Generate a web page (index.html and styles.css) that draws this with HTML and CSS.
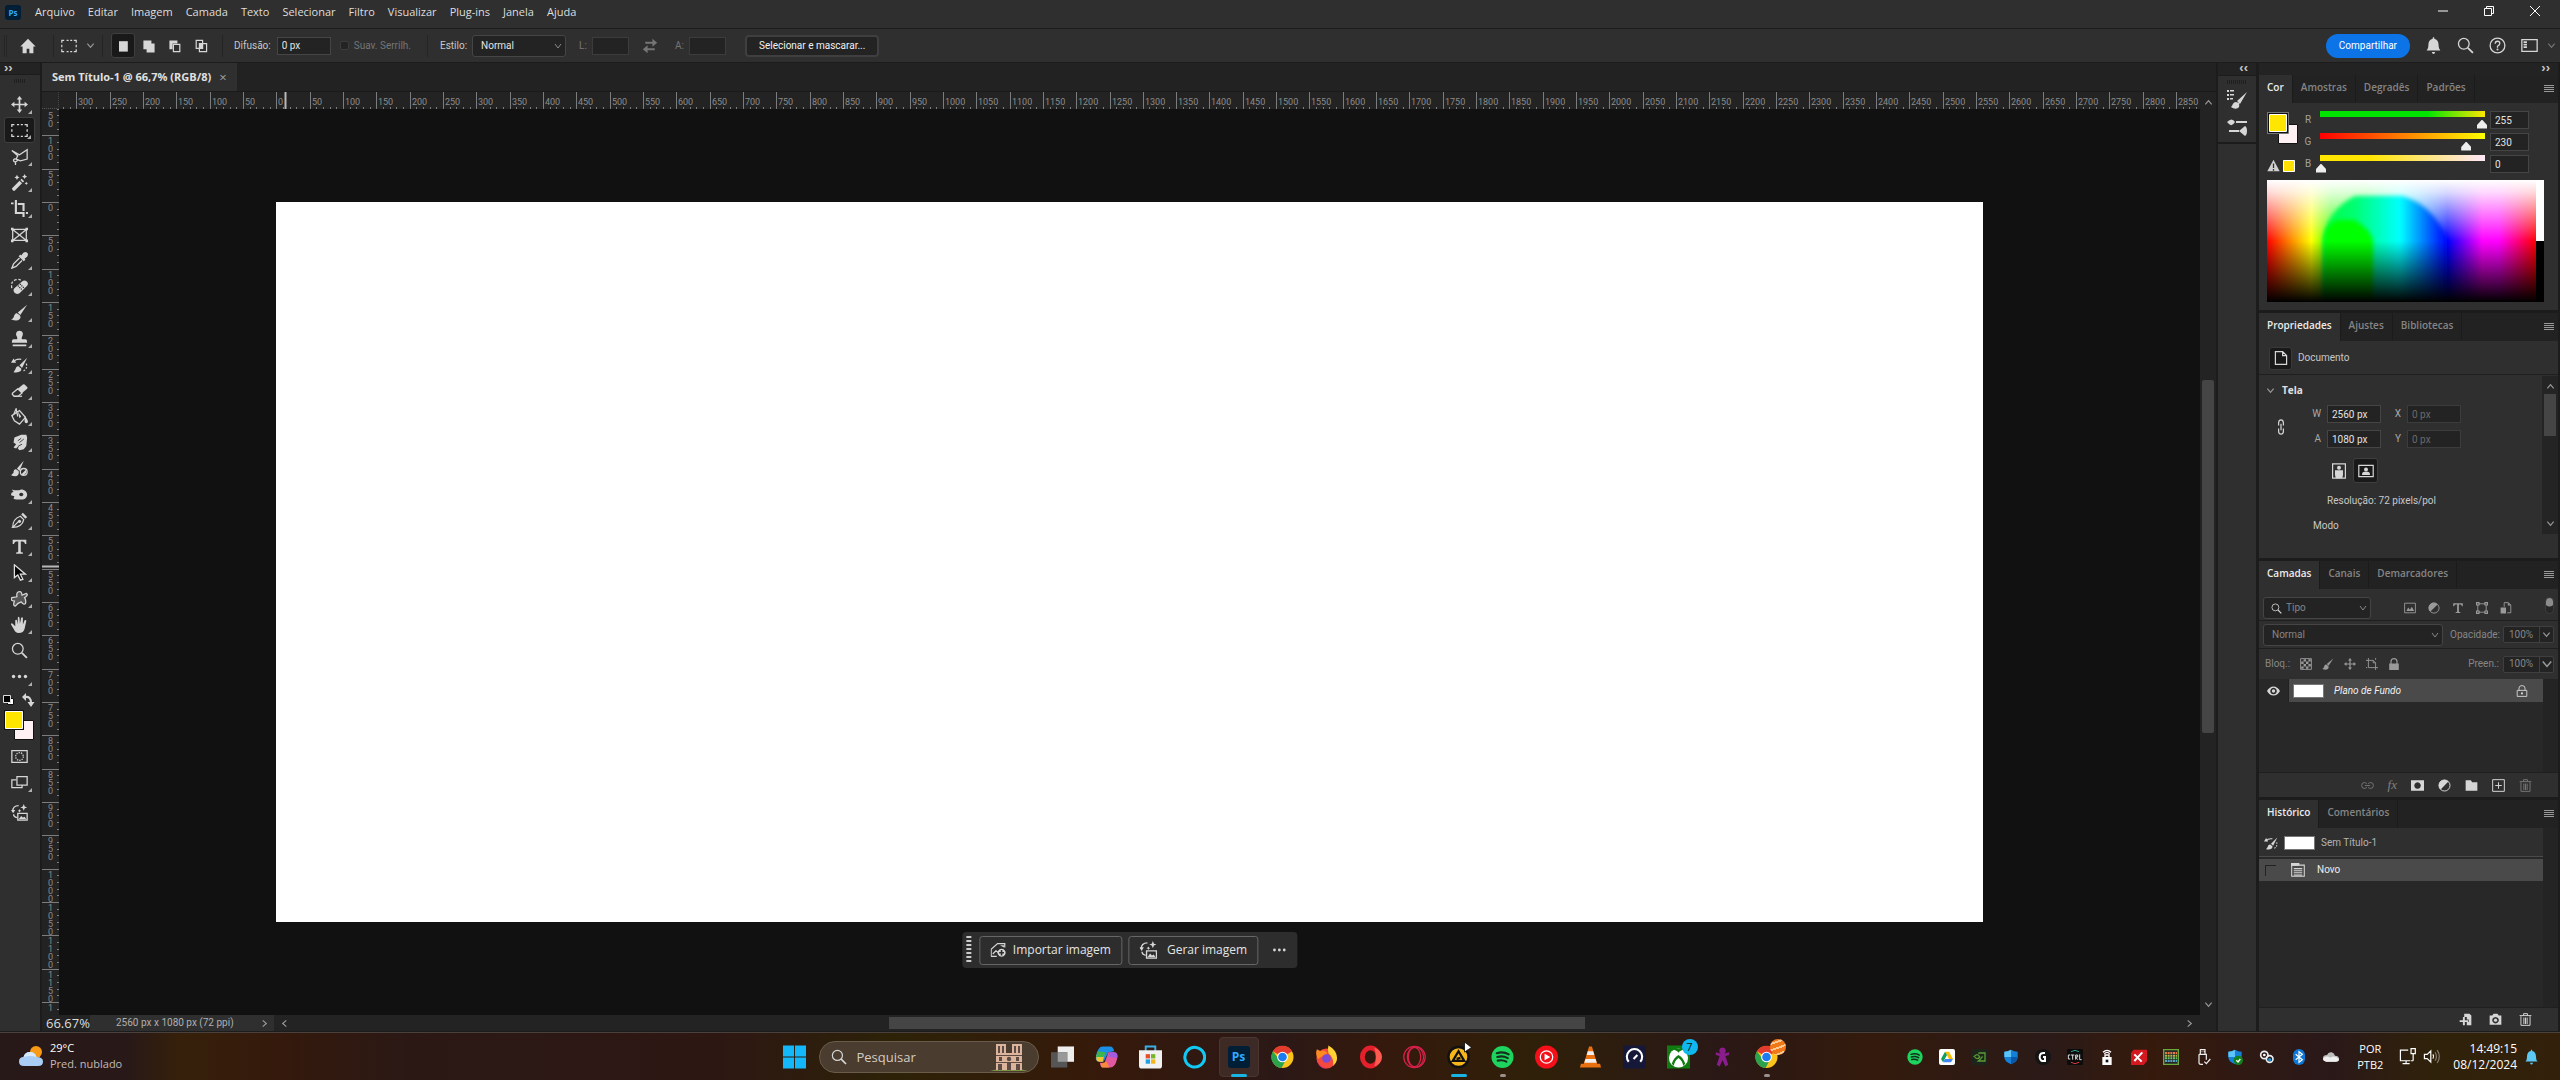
FILE: index.html
```html
<!DOCTYPE html>
<html lang="pt-BR">
<head>
    <meta charset="UTF-8">
    <meta name="viewport" content="width=device-width, initial-scale=1.0">
    <title>Sem Título-1 @ 66,7% (RGB/8)</title>
    <link rel="stylesheet" href="styles.css">
</head>
<body>

<!-- Icon sprite -->
<svg class="sprite" aria-hidden="true">
    <symbol id="i-home" viewBox="0 0 20 20"><path d="M10 2 1.500 10.500H4V18h4.500v-5h3v5H16v-7.500h2.500z"/></symbol>
    <symbol id="i-chev" viewBox="0 0 20 20"><path class="ln" d="m3 6 7 8 7-8"/></symbol>
    <symbol id="i-marquee" viewBox="0 0 20 20"><path class="ln" d="M1 6V3h3M7 3h2.500M11.500 3H14M16 3h3v3M19 8.500v3M19 14v3h-3M14 17h-2.500M9.500 17H7M4 17H1v-3M1 11.500v-3"/></symbol>
    <symbol id="i-sel-new" viewBox="0 0 20 20"><path d="M5 4h11v13H5z"/></symbol>
    <symbol id="i-sel-add" viewBox="0 0 20 20"><path d="M3 3h10v4h4v11H7v-4H3z"/></symbol>
    <symbol id="i-sel-sub" viewBox="0 0 20 20"><path d="M3 3h10v4H7v7H3z"/><path class="ln" d="M8 8h8v9H8z"/></symbol>
    <symbol id="i-sel-int" viewBox="0 0 20 20"><path class="ln" d="M4 3h8v10H4zM8 7h9v10H8z"/><path d="M8 7h4v6H8z"/></symbol>
    <symbol id="i-swap" viewBox="0 0 20 20"><path d="M13 1l6 5-6 5V7.200H4V4.800h9zM7 9l-6 5 6 5v-3.800h9v-2.400H7z"/></symbol>
    <symbol id="i-move" viewBox="0 0 20 20"><path d="m10 0 3.200 4H11v5h5V6.800l4 3.200-4 3.200V11h-5v5h2.200L10 20l-3.200-4H9v-5H4v2.200L0 10l4-3.200V9h5V4H6.800z"/></symbol>
    <symbol id="i-lasso" viewBox="0 0 20 20"><path class="ln" d="m1 3 9 5 9-6v11l-8 2-5-2 2-4zM6 13c-3-1-4 2-2 3s4-1 4-3M5 16c0 2 1 2 0 4"/></symbol>
    <symbol id="i-wand" viewBox="0 0 20 20"><path d="m1 17 9-9 3 3-9 9q-2 0-3-3zm10-10 1.500-1.500 3 3L14 10zM7 1l1 2 2 1-2 1-1 2-1-2-2-1 2-1zM16 0l1 2 2 1-2 1-1 2-1-2-2-1 2-1zM18 9l.7 1.300L20 11l-1.300.7L18 13l-.7-1.300L16 11l1.300-.7z"/></symbol>
    <symbol id="i-crop" viewBox="0 0 20 20"><path d="M0 3h3v2H0zM4.500 0H7v14h9v2.500H4.500zM8 3.500h8V13h-2.500V6H8zM13.500 16.500H16V20h-2.500zM17.500 14H20v2.500h-2.500z"/></symbol>
    <symbol id="i-frame" viewBox="0 0 20 20"><path class="ln" d="M2 4h16v13H2zM2 4l16 13M18 4 2 17"/><path d="M0 2h3v3H0zM17 2h3v3h-3zM0 16h3v3H0zM17 16h3v3h-3z"/></symbol>
    <symbol id="i-eyedrop" viewBox="0 0 20 20"><path d="M12 4q4-6 7-3t-3 7l1 1-2 2-6-6 2-2z"/><path class="ln" d="M10 7 3 14l-2 5 5-2 7-7"/></symbol>
    <symbol id="i-heal" viewBox="0 0 20 20"><path d="m4 12 9-8c4-3 9 2 6 5l-9 9c-5 3-9-3-6-6z"/><path class="ln" stroke-dasharray="3 2" d="M1 12Q-1 4 6 2q4-1 6 1"/><path stroke="#2f2f2f" fill="none" stroke-dasharray="1.500 1" stroke-width="1.500" d="m8 9 5 5M10.500 7l5 5"/></symbol>
    <symbol id="i-brush" viewBox="0 0 20 20"><path d="M19 1 8 10l3 3zM7 11c-3 0-3 3-4 5q-1 2-3 2 7 3 10 0c2-2 1-4 0-5z"/></symbol>
    <symbol id="i-stamp" viewBox="0 0 20 20"><path d="M10 1c4 0 5 4 3 7q-1 2 0 3h4q2 0 2 4H1q0-4 2-4h4q1-1 0-3C5 5 6 1 10 1zM2 17h16v2H2z"/></symbol>
    <symbol id="i-histbrush" viewBox="0 0 20 20"><path d="m19 2-9 9 3 3zM9 12c-3 0-3 2-4 4l-2 3q5 1 8-1c2-2 1-4 0-4zM0 8l3-5 3 5z"/><path class="ln" d="M3 7q3-4 9-3"/><path class="ln" stroke-dasharray="2 2" d="M18 9q2 6-4 9"/></symbol>
    <symbol id="i-eraser" viewBox="0 0 20 20"><path d="m8 8 6-5q1-1 2 0l3 3q1 1 0 2l-6 5z"/><path class="ln" d="m8 8-6 5q-1 1 0 2l2 2h4l5-4z"/><path d="M3 16h10v1.500H3z"/></symbol>
    <symbol id="i-bucket" viewBox="0 0 20 20"><path class="ln" d="m1 9 9-6 7 8-7 8-6-4zM8 10 6 1 3 8"/><path d="M16 9q4 5 4 7t-2 2-2-2zM8 4l4 6-2 2z"/></symbol>
    <symbol id="i-smudge" viewBox="0 0 20 20"><path d="m4 4 8-3h6l1 3-1 10-3 4-5 1-2-2 2-4-4 4-3-1 3-4-3-2z"/><path stroke="#2f2f2f" fill="none" d="m8 8 4-3M10 10l5-4M9 14l4-2"/></symbol>
    <symbol id="i-mixer" viewBox="0 0 20 20"><path d="M15 1 7 10l3 3zM6 11c-3 0-3 3-3 4l-3 3q6 2 8 0c2-2 1-4 1-5z"/><circle class="ln" cx="15" cy="14" r="4"/><path d="m12 17 6-6v4l-3 3z"/></symbol>
    <symbol id="i-sponge" viewBox="0 0 20 20"><path fill-rule="evenodd" d="M1 4q6 2 11 0c4 0 7 3 7 6s-2 6-7 6-7 0-9-1l1-3-4-1q0-4 3-4zM12 8a2.500 2 0 1 0 .1 0z"/></symbol>
    <symbol id="i-pen" viewBox="0 0 20 20"><path class="ln" d="M2 18q0-10 9-13l4 4q-2 9-13 9l7-7"/><path d="m12 3 2-2 5 5-2 2z"/><circle cx="10" cy="11" r="1.800"/></symbol>
    <symbol id="i-type" viewBox="0 0 20 20"><path d="M2 2h16v5h-1.500Q16 4 14 4h-2.500v12q0 1 2.500 1v1.500H6V17q2.500 0 2.500-1V4H6Q4 4 3.500 7H2z"/></symbol>
    <symbol id="i-arrow" viewBox="0 0 20 20"><path fill="#050505" stroke="#e0e0e0" stroke-width="1.500" d="M4 1v15l4-3 3 6 3-1-3-6h6z"/></symbol>
    <symbol id="i-shape" viewBox="0 0 20 20"><path fill="#555" stroke="currentColor" stroke-width="1.500" d="M10 2q2-1 3 4l5-2q3 2-2 5 2 3 1 7-2 2-5-2-4 1-7 5-3 0-1-6-5 0-3-4l6-1q-1-6 3-6z"/></symbol>
    <symbol id="i-hand" viewBox="0 0 20 20"><path d="M5 5q1-1 2 0l1 5V2q1-2 2 0l.500 7L12 2q1-1 2 0v8l2-5q2-1 2 1l-2 9q-1 5-7 5-4 0-6-5L0 10q0-2 2-1l3 3z"/></symbol>
    <symbol id="i-zoom" viewBox="0 0 20 20"><circle class="ln" cx="8" cy="8" r="6.300"/><path d="m12 13.500 1.500-1.500 6 6-1.500 1.500z"/></symbol>
    <symbol id="i-dots" viewBox="0 0 20 20"><circle cx="3" cy="10" r="2"/><circle cx="10" cy="10" r="2"/><circle cx="17" cy="10" r="2"/></symbol>
    <symbol id="i-quick" viewBox="0 0 20 20"><path class="ln" d="M1 3h18v14H1z"/><circle class="ln" stroke-dasharray="1.500 1.300" cx="10" cy="10" r="4.500"/></symbol>
    <symbol id="i-screen" viewBox="0 0 20 20"><path class="ln" d="M6 7H1v9h12v-3M7 3h12v10H7z"/></symbol>
    <symbol id="i-gen" viewBox="0 0 20 20"><path class="ln" d="M2 9Q2 2 9 2M3 12q0 3 4 4"/><path d="m15 0 1.200 3L19 4l-2.800 1L15 8l-1.200-3L11 4l2.800-1zM0 7h5l-2.500 4zM10 6l.7 1.300L12 8l-1.300.7L10 10l-.7-1.300L8 8l1.300-.7z"/><path class="ln" d="M8 11h11v8H8z"/><path d="m9 18 3-4 2 2 2-1 2 3z"/></symbol>
    <symbol id="i-bell" viewBox="0 0 20 20"><path d="M10 0q1 0 1 2c4 1 5 4 5 8q0 4 2 6H2q2-2 2-6c0-4 1-7 5-8q0-2 1-2zM8 17.500h4q-.500 2.500-2 2.500t-2-2.500z"/></symbol>
    <symbol id="i-help" viewBox="0 0 20 20"><circle class="ln" cx="10" cy="10" r="8.700"/><path class="ln" stroke-width="2" d="M7.300 8q0-3 2.700-3t2.700 2.500Q12.700 9 10 11v1.500"/><circle cx="10" cy="14.800" r="1.200"/></symbol>
    <symbol id="i-workspace" viewBox="0 0 20 20"><path class="ln" d="M1 3h18v14H1z"/><path d="M3 5h4v2H3zM3 8h4v2H3zM3 11h4v2H3z"/></symbol>
    <symbol id="i-brushlist" viewBox="0 0 20 20"><path d="M20 3 10 12l3 3zM9 13c-3 0-3 3-5 5q4 3 7 1c2-1 1-4 1-5zM0 1h2v2H0zM3 1h4v1.500H3zM0 5h2v2H0zM3 5h4v1.500H3zM0 9h2v2H0zM3 9h3v1.500H3z"/></symbol>
    <symbol id="i-brushset" viewBox="0 0 20 20"><path d="M9 4h11v2H9zM0 5q5-5 8 0-3 5-6 2zM2 13h10v2H2zM12 14l6-5q2 1 2 5t-2 5z"/></symbol>
    <symbol id="i-warn" viewBox="0 0 20 20"><path fill-rule="evenodd" d="m10 1 9.500 18H.5zM9 7v7h2V7zm0 8.500V18h2v-2.500z"/></symbol>
    <symbol id="i-doc" viewBox="0 0 20 20"><path class="ln" d="M3 2h9l5 5v11H3zM12 2v5h5"/></symbol>
    <symbol id="i-link" viewBox="0 0 20 20"><path class="ln" stroke-width="2.400" d="M7 8V5q0-4 3-4t3 4v3M7 12v3q0 4 3 4t3-4v-3M10 6v8"/></symbol>
    <symbol id="i-portrait" viewBox="0 0 20 20"><path class="ln" d="M2 1h16v18H2z"/><circle cx="10" cy="6" r="2.500"/><path d="M5 9h10v6l-1 4H6l-1-4z"/></symbol>
    <symbol id="i-landscape" viewBox="0 0 20 20"><path class="ln" d="M1 3h18v14H1z"/><circle cx="10" cy="8" r="2.500"/><path d="M5 15q0-4 3-4h4q3 0 3 4z"/></symbol>
    <symbol id="i-image" viewBox="0 0 20 20"><path class="ln" d="M1 2h18v16H1z"/><path d="m4 15 3-6 3 4 3-5 4 7z"/></symbol>
    <symbol id="i-adjust" viewBox="0 0 20 20"><circle class="ln" cx="10" cy="10" r="8.500"/><path d="M16 4A8.500 8.500 0 1 0 4 16z"/></symbol>
    <symbol id="i-vector" viewBox="0 0 20 20"><path class="ln" d="M3 3h14v14H3z"/><path d="M0 0h6v6H0zM14 0h6v6h-6zM0 14h6v6H0zM14 14h6v6h-6z"/><path fill="#2f2f2f" d="M2 2h2v2H2zM16 2h2v2h-2zM2 16h2v2H2zM16 16h2v2h-2z"/></symbol>
    <symbol id="i-smart" viewBox="0 0 20 20"><path class="ln" d="M7 8V1h7l4 4v13h-6"/><path d="M1 9h9v10H1zM13 1v5h5z"/></symbol>
    <symbol id="i-checker" viewBox="0 0 20 20"><path class="ln" d="M1 1h18v18H1z"/><path d="M6 2h4v4H6zM14 2h4v4h-4zM2 6h4v4H2zM10 6h4v4h-4zM6 10h4v4H6zM14 10h4v4h-4zM2 14h4v4H2zM10 14h4v4h-4z"/></symbol>
    <symbol id="i-artboard" viewBox="0 0 20 20"><path class="ln" d="M4 0v16M0 4h12l4 4v12M4 16h16M12 4v4h4M16 0v3M0 16h2"/></symbol>
    <symbol id="i-lock" viewBox="0 0 20 20"><path fill-rule="evenodd" d="M2 9h2V6q0-6 6-6t6 6v3h2v11H2zm4 0h8V6q0-4-4-4T6 6z"/></symbol>
    <symbol id="i-lock2" viewBox="0 0 20 20"><path class="ln" d="M2 9h16v10H2zM5 9V5q0-4 5-4t5 4v4"/><circle cx="10" cy="14" r="1.800"/></symbol>
    <symbol id="i-eye" viewBox="0 0 20 20"><path fill-rule="evenodd" d="M0 10q4-7 10-7t10 7q-4 7-10 7T0 10zm10-5a5 5 0 1 0 .1 0z"/><circle cx="10" cy="10" r="2.600"/></symbol>
    <symbol id="i-chain" viewBox="0 0 20 20"><path class="ln" d="M9 7Q7 5.500 5 5.500q-4 0-4 4.500t4 4.500q2 0 4-1.500M11 7q2-1.500 4-1.500 4 0 4 4.500t-4 4.500q-2 0-4-1.500M6 10h8"/></symbol>
    <symbol id="i-mask" viewBox="0 0 20 20"><path fill-rule="evenodd" d="M0 2h20v16H0zm10 3a5 5 0 1 0 .1 0z"/></symbol>
    <symbol id="i-folder" viewBox="0 0 20 20"><path d="M1 2h8l2 3h8v13H1z"/></symbol>
    <symbol id="i-plus" viewBox="0 0 20 20"><path class="ln" d="M1 1h18v18H1zM10 5v10M5 10h10"/></symbol>
    <symbol id="i-trash" viewBox="0 0 20 20"><path class="ln" d="M1 4h18M7 4V1h6v3M3 5v14h14V5M7.500 7v10M10 7v10M12.500 7v10"/></symbol>
    <symbol id="i-list" viewBox="0 0 20 20"><path class="ln" d="M1 3h18v16H1zM4 8h12M4 11h12M4 14h12M4 17h12"/><path d="M0 0h12v4H0z"/></symbol>
    <symbol id="i-newdoc" viewBox="0 0 20 20"><path d="M8 1h8l3 3v15h-7v-5h3v-4h-3V6H8zM6 6h3v5h5v3H9v5H6v-5H1v-3h5z"/></symbol>
    <symbol id="i-camera" viewBox="0 0 20 20"><path fill-rule="evenodd" d="M1 4h4l2-3h6l2 3h4v14H1zm9 2a5 5 0 1 0 .1 0z"/><circle cx="10" cy="11" r="2.500"/></symbol>
    <symbol id="i-import" viewBox="0 0 20 20"><path class="ln" d="M1 18V9l8-7h9v5M1 18h7M3 15l4-4 3 2"/><path fill-rule="evenodd" d="m12 4 5 0 0 3zM14 8.500a5 5 0 1 0 .1 0zM13 10h2v2.500h2v2h-2V17h-2v-2.500h-2v-2h2z"/></symbol>
    <symbol id="i-cursor" viewBox="0 0 20 20"><path fill="#fff" stroke="#000" stroke-width="1.500" d="M3 0v20l14-9z"/></symbol>
    <symbol id="a-chrome" viewBox="0 0 24 24"><circle cx="12" cy="12" r="11.500" fill="#fbc31c"/><path fill="#e33b2e" d="M12 12 2 6A11.500 11.500 0 0 1 22 6z"/><path fill="#2ba24c" d="M2 6a11.500 11.500 0 0 0 9 17.400L16 14l-8 0z"/><circle cx="12" cy="12" r="5.600" fill="#fff"/><circle cx="12" cy="12" r="4.500" fill="#1a7cf0"/></symbol>
    <symbol id="a-spotify" viewBox="0 0 24 24"><circle cx="12" cy="12" r="11.500" fill="#1ed45e"/><path fill="none" stroke="#14301c" stroke-linecap="round" stroke-width="2.200" d="M6 8q7-2 12.500 1.200M6.500 12q6-1.600 11 1.100M7 15.800q5-1.300 9 1"/></symbol>
    <symbol id="a-shield" viewBox="0 0 24 24"><path fill="#1580d8" d="M12 1q5 3 10 3v8q0 7-10 11Q2 19 2 12V4q5 0 10-3z"/><path fill="#5cc4f8" d="M12 1v11H2V4q5 0 10-3z"/><path fill="#0a58a8" d="M12 12h10q0 7-10 11z"/></symbol>
</svg>

<header class="menubar">
    <span class="ps-logo">Ps</span>
    <nav class="menus">
        <a href="#">Arquivo</a><a href="#">Editar</a><a href="#">Imagem</a><a href="#">Camada</a><a href="#">Texto</a><a href="#">Selecionar</a><a href="#">Filtro</a><a href="#">Visualizar</a><a href="#">Plug-ins</a><a href="#">Janela</a><a href="#">Ajuda</a>
    </nav>
    <div class="window-buttons">
        <button aria-label="Minimizar"><svg viewBox="0 0 10 10"><path class="ln" d="M0 5h10"/></svg></button>
        <button aria-label="Restaurar"><svg viewBox="0 0 10 10"><path class="ln" d="M.5 2.500h7v7h-7zM2.500 2V.5h7v7H8"/></svg></button>
        <button aria-label="Fechar"><svg viewBox="0 0 10 10"><path class="ln" d="m0 0 10 10M10 0 0 10"/></svg></button>
    </div>
</header>

<section class="options">
    <span class="home"><svg class="ico"><use href="#i-home"/></svg></span>
    <span class="tool-preset"><svg class="ico"><use href="#i-marquee"/></svg><svg class="ico tiny"><use href="#i-chev"/></svg></span>
    <div class="modes">
        <button class="active" aria-label="Nova seleção"><svg class="ico"><use href="#i-sel-new"/></svg></button>
        <button aria-label="Adicionar"><svg class="ico"><use href="#i-sel-add"/></svg></button>
        <button aria-label="Subtrair"><svg class="ico"><use href="#i-sel-sub"/></svg></button>
        <button aria-label="Interseção"><svg class="ico"><use href="#i-sel-int"/></svg></button>
    </div>
    <div class="feather">
        <label for="feather">Difusão:</label>
        <input class="field" id="feather" type="text" value="0 px">
        <input class="tick" id="anti" type="checkbox" disabled>
        <label class="dim" for="anti">Suav. Serrilh.</label>
    </div>
    <div class="style-opts">
        <label for="estilo">Estilo:</label>
        <select class="drop" id="estilo"><option>Normal</option></select>
        <label class="dim" for="larg">L:</label>
        <input class="field" id="larg" type="text" disabled>
        <svg class="ico dim"><use href="#i-swap"/></svg>
        <label class="dim" for="alt">A:</label>
        <input class="field" id="alt" type="text" disabled>
    </div>
    <button class="mask-btn">Selecionar e mascarar...</button>
    <div class="options-right">
        <button class="share">Compartilhar</button>
        <svg class="ico"><use href="#i-bell"/></svg>
        <svg class="ico"><use href="#i-zoom"/></svg>
        <svg class="ico"><use href="#i-help"/></svg>
        <svg class="ico"><use href="#i-workspace"/></svg>
        <svg class="ico tiny dim"><use href="#i-chev"/></svg>
    </div>
</section>

<main class="workspace">
    <aside class="toolbar">
        <div class="strip"><span>››</span></div>
        <div class="grip"></div>
        <div class="tools">
            <button class="more" aria-label="Mover"><svg class="ico"><use href="#i-move"/></svg></button>
            <button class="more active" aria-label="Letreiro"><svg class="ico"><use href="#i-marquee"/></svg></button>
            <button class="more" aria-label="Laço"><svg class="ico"><use href="#i-lasso"/></svg></button>
            <button class="more" aria-label="Varinha"><svg class="ico"><use href="#i-wand"/></svg></button>
            <button class="more" aria-label="Corte"><svg class="ico"><use href="#i-crop"/></svg></button>
            <button aria-label="Quadro"><svg class="ico"><use href="#i-frame"/></svg></button>
            <button class="more" aria-label="Conta-gotas"><svg class="ico"><use href="#i-eyedrop"/></svg></button>
            <button class="more" aria-label="Recuperação"><svg class="ico"><use href="#i-heal"/></svg></button>
            <button class="more" aria-label="Pincel"><svg class="ico"><use href="#i-brush"/></svg></button>
            <button class="more" aria-label="Carimbo"><svg class="ico"><use href="#i-stamp"/></svg></button>
            <button class="more" aria-label="Pincel do histórico"><svg class="ico"><use href="#i-histbrush"/></svg></button>
            <button class="more" aria-label="Borracha"><svg class="ico"><use href="#i-eraser"/></svg></button>
            <button class="more" aria-label="Lata de tinta"><svg class="ico"><use href="#i-bucket"/></svg></button>
            <button class="more" aria-label="Borrar"><svg class="ico"><use href="#i-smudge"/></svg></button>
            <button aria-label="Pincel de mistura"><svg class="ico"><use href="#i-mixer"/></svg></button>
            <button class="more" aria-label="Esponja"><svg class="ico"><use href="#i-sponge"/></svg></button>
            <button class="more" aria-label="Caneta"><svg class="ico"><use href="#i-pen"/></svg></button>
            <button class="more" aria-label="Texto"><svg class="ico"><use href="#i-type"/></svg></button>
            <button class="more" aria-label="Seleção de caminho"><svg class="ico"><use href="#i-arrow"/></svg></button>
            <button class="more" aria-label="Forma"><svg class="ico"><use href="#i-shape"/></svg></button>
            <button class="more" aria-label="Mão"><svg class="ico"><use href="#i-hand"/></svg></button>
            <button aria-label="Zoom"><svg class="ico"><use href="#i-zoom"/></svg></button>
            <button class="more" aria-label="Mais"><svg class="ico"><use href="#i-dots"/></svg></button>
        </div>
        <svg class="fgbg" viewBox="0 0 40 52">
            <path fill="#fff" stroke="#111" d="M7.500 7.500h6v6h-6z"/><path fill="#000" stroke="#ddd" d="M3.500 4.500h7v7h-7z"/>
            <path fill="none" stroke="#d6d6d6" stroke-width="2" d="M25 6q6-1 6 6"/><path fill="#d6d6d6" d="m26 2-4 4 4 4zM27.500 11h7L31 16z"/>
            <path fill="#fff0f4" stroke="#111" d="M14.500 29.500h19v19h-19z"/>
            <path fill="#ffe600" stroke="#111" stroke-width="3" d="M5.500 20.500h17v17h-17z"/><path fill="#ffe600" stroke="#fff" d="M5.500 20.500h17v17h-17z"/>
        </svg>
        <div class="tools">
            <button aria-label="Máscara rápida"><svg class="ico"><use href="#i-quick"/></svg></button>
            <button class="more" aria-label="Modo de tela"><svg class="ico"><use href="#i-screen"/></svg></button>
            <button class="gen" aria-label="Gerar"><svg class="ico"><use href="#i-gen"/></svg></button>
        </div>
    </aside>

    <section class="document">
        <div class="doc-tabs"><div class="doc-tab">Sem Título-1 @ 66,7% (RGB/8)<button aria-label="Fechar">×</button></div></div>
        <div class="view">
            <div class="corner"></div>
            <svg class="ruler ruler-x" id="rulerX"></svg>
            <div class="vscroll">
                <svg class="ico tiny up"><use href="#i-chev"/></svg>
                <div class="vtrack"><div class="vthumb"></div></div>
                <svg class="ico tiny"><use href="#i-chev"/></svg>
            </div>
            <svg class="ruler ruler-y" id="rulerY"></svg>
            <div class="canvas-area">
                <div class="artboard" id="artboard"></div>
                <div class="context-bar">
                    <span class="handle"></span>
                    <button><svg class="ico"><use href="#i-import"/></svg>Importar imagem</button>
                    <button><svg class="ico"><use href="#i-gen"/></svg>Gerar imagem</button>
                    <svg class="ico dots"><use href="#i-dots"/></svg>
                </div>
            </div>
            <div class="status">
                <span class="zoom">66.67%</span>
                <span class="size">2560 px x 1080 px (72 ppi)<svg class="ico tiny right"><use href="#i-chev"/></svg></span>
                <svg class="ico tiny left"><use href="#i-chev"/></svg>
                <div class="htrack"><div class="hthumb"></div></div>
                <svg class="ico tiny right"><use href="#i-chev"/></svg>
            </div>
        </div>
    </section>

    <aside class="dock">
        <div class="strip end"><span>‹‹</span></div>
        <div class="dock-group">
            <div class="grip"></div>
            <svg class="ico"><use href="#i-brushlist"/></svg>
            <svg class="ico"><use href="#i-brushset"/></svg>
        </div>
    </aside>

    <aside class="panels">
        <div class="strip end"><span>››</span></div>

        <section class="panel">
            <div class="tabs"><button class="active">Cor</button><button>Amostras</button><button>Degradês</button><button>Padrões</button><span class="burger"></span></div>
            <div class="color-body">
                <div class="color-top">
                    <svg class="swatches" viewBox="0 0 36 66">
                        <path fill="#fff0f4" stroke="#111" d="M11.500 12.500h19v19h-19z"/>
                        <path fill="#ffe600" stroke="#777" d="M.5.5h21v21H.5z"/><path fill="none" stroke="#111" stroke-width="2" d="M2 2h18v18H2z"/><path fill="none" stroke="#fff" d="M2.500 2.500h17v17h-17z"/>
                        <path fill="#ffe000" stroke="#fff" d="M16.500 48.500h11v11h-11z"/>
                        <svg x="0" y="47" width="13" height="13" class="warn"><use href="#i-warn"/></svg>
                    </svg>
                    <div class="sliders">
                        <div class="slider"><label for="r">R</label><input class="range red" type="range" min="0" max="255" value="255" aria-label="R"><input class="field" id="r" type="text" value="255"></div>
                        <div class="slider"><label for="g">G</label><input class="range green" type="range" min="0" max="255" value="230" aria-label="G"><input class="field" id="g" type="text" value="230"></div>
                        <div class="slider"><label for="b">B</label><input class="range blue" type="range" min="0" max="255" value="0" aria-label="B"><input class="field" id="b" type="text" value="0"></div>
                    </div>
                </div>
                <svg class="spectrum" viewBox="0 0 277 122" preserveAspectRatio="none">
                    <defs>
                        <linearGradient id="hue"><stop offset="0" stop-color="#f00"/><stop offset=".165" stop-color="#ff0"/><stop offset=".24" stop-color="#3f0"/><stop offset=".37" stop-color="#0f0"/><stop offset=".5" stop-color="#0ff"/><stop offset=".67" stop-color="#00f"/><stop offset=".8" stop-color="#f0f"/><stop offset=".86" stop-color="#f0f"/><stop offset="1" stop-color="#f00"/></linearGradient>
                        <linearGradient id="light" x2="0" y2="1"><stop offset="0" stop-color="#fff"/><stop offset=".1" stop-color="#fff" stop-opacity=".85"/><stop offset=".5" stop-color="#fff" stop-opacity="0"/></linearGradient>
                        <linearGradient id="dark" x2="0" y2="1"><stop offset=".5" stop-color="#000" stop-opacity="0"/><stop offset="1" stop-color="#000"/></linearGradient>
                        <linearGradient id="dome" gradientUnits="userSpaceOnUse" x1="56" x2="180"><stop offset="0" stop-color="#0f4"/><stop offset=".25" stop-color="#00ff70"/><stop offset=".62" stop-color="#0ff"/><stop offset=".8" stop-color="#08f"/><stop offset="1" stop-color="#00f"/></linearGradient>
                        <filter id="soft"><feGaussianBlur stdDeviation="2"/></filter>
                    </defs>
                    <path fill="url(#hue)" d="M0 0h269v122H0z"/>
                    <path fill="url(#light)" d="M0 0h269v122H0z"/>
                    <path fill="url(#dome)" filter="url(#soft)" d="M56 122V60q4-30 32-44h47q30 8 46 44v62z"/>
                    <path fill="#0f0" filter="url(#soft)" d="M57 122V58q3-17 16-18h14q18 10 19 22v60z"/>
                    <path fill="url(#dark)" d="M0 0h269v122H0z"/>
                    <path fill="#fff" d="M269 0h8v61h-8z"/><path fill="#000" d="M269 61h8v61h-8z"/>
                </svg>
            </div>
        </section>

        <section class="panel">
            <div class="tabs"><button class="active">Propriedades</button><button>Ajustes</button><button>Bibliotecas</button><span class="burger"></span></div>
            <div class="doc-row"><span class="chip"><svg class="ico"><use href="#i-doc"/></svg></span>Documento</div>
            <div class="props">
                <div class="props-main">
                    <h2><svg class="ico tiny"><use href="#i-chev"/></svg>Tela</h2>
                    <div class="dims">
                        <svg class="ico link"><use href="#i-link"/></svg>
                        <label for="w">W</label><input class="field" id="w" type="text" value="2560 px">
                        <label for="x">X</label><input class="field" id="x" type="text" value="0 px" disabled>
                        <label for="a">A</label><input class="field" id="a" type="text" value="1080 px">
                        <label for="y">Y</label><input class="field" id="y" type="text" value="0 px" disabled>
                    </div>
                    <div class="orient">
                        <button aria-label="Retrato"><svg class="ico"><use href="#i-portrait"/></svg></button>
                        <button class="active" aria-label="Paisagem"><svg class="ico"><use href="#i-landscape"/></svg></button>
                    </div>
                    <p class="res">Resolução: 72 pixels/pol</p>
                    <p class="mode">Modo</p>
                </div>
                <div class="props-scroll">
                    <svg class="ico tiny up"><use href="#i-chev"/></svg>
                    <div class="props-thumb"></div>
                    <svg class="ico tiny"><use href="#i-chev"/></svg>
                </div>
            </div>
        </section>

        <section class="panel">
            <div class="tabs"><button class="active">Camadas</button><button>Canais</button><button>Demarcadores</button><span class="burger"></span></div>
            <div class="layer-filter">
                <div class="search-drop"><svg class="ico"><use href="#i-zoom"/></svg><select class="drop" aria-label="Tipo"><option>Tipo</option></select></div>
                <div class="filters">
                    <svg class="ico"><use href="#i-image"/></svg>
                    <svg class="ico"><use href="#i-adjust"/></svg>
                    <svg class="ico"><use href="#i-type"/></svg>
                    <svg class="ico"><use href="#i-vector"/></svg>
                    <svg class="ico"><use href="#i-smart"/></svg>
                </div>
                <span class="toggle"></span>
            </div>
            <div class="layer-blend">
                <select class="drop" aria-label="Modo de mesclagem"><option>Normal</option></select>
                <label for="opac">Opacidade:</label>
                <div class="percent"><input id="opac" type="text" value="100%"><button aria-label="Opacidade"><svg class="ico tiny"><use href="#i-chev"/></svg></button></div>
            </div>
            <div class="layer-lock">
                <span>Bloq.:</span>
                <svg class="ico"><use href="#i-checker"/></svg>
                <svg class="ico"><use href="#i-brush"/></svg>
                <svg class="ico"><use href="#i-move"/></svg>
                <svg class="ico"><use href="#i-artboard"/></svg>
                <svg class="ico"><use href="#i-lock"/></svg>
                <label for="fill">Preen.:</label>
                <div class="percent"><input id="fill" type="text" value="100%"><button aria-label="Preenchimento"><svg class="ico tiny"><use href="#i-chev"/></svg></button></div>
            </div>
            <div class="list layers">
                <div class="layer">
                    <span class="eye"><svg class="ico"><use href="#i-eye"/></svg></span>
                    <div class="layer-main"><span class="thumb"></span><em>Plano de Fundo</em><svg class="ico"><use href="#i-lock2"/></svg></div>
                </div>
            </div>
            <div class="panel-foot">
                <svg class="ico dim"><use href="#i-chain"/></svg>
                <span class="fx">fx</span>
                <svg class="ico"><use href="#i-mask"/></svg>
                <svg class="ico"><use href="#i-adjust"/></svg>
                <svg class="ico"><use href="#i-folder"/></svg>
                <svg class="ico"><use href="#i-plus"/></svg>
                <svg class="ico dim"><use href="#i-trash"/></svg>
            </div>
        </section>

        <section class="panel grow">
            <div class="tabs"><button class="active">Histórico</button><button>Comentários</button><span class="burger"></span></div>
            <div class="list history">
                <div class="snapshot"><svg class="ico"><use href="#i-histbrush"/></svg><span class="thumb"></span>Sem Título-1</div>
                <div class="state"><span class="slot"></span><svg class="ico"><use href="#i-list"/></svg>Novo</div>
            </div>
            <div class="panel-foot">
                <svg class="ico"><use href="#i-newdoc"/></svg>
                <svg class="ico"><use href="#i-camera"/></svg>
                <svg class="ico"><use href="#i-trash"/></svg>
            </div>
        </section>
    </aside>
</main>

<footer class="taskbar">
    <div class="weather">
        <svg viewBox="0 0 24 20"><circle cx="17" cy="6" r="6" fill="#f99a16"/><path fill="#a9cdf5" d="M5 20q-5 0-5-4.500T4.500 11Q6 6 11 6t6.500 5Q24 11 24 15.500T19 20z"/><path fill="#d8e9fc" d="M4.500 11Q6 6 11 6t6.500 5q-6-2-13 0z"/></svg>
        <div><div>29°C</div><div class="sub">Pred. nublado</div></div>
    </div>
    <div class="apps">
        <a href="#" class="app"><svg viewBox="0 0 24 24"><path fill="#12b8fa" d="M0 0h11.500v11.500H0zM12.500 0H24v11.500H12.500zM0 12.500h11.500V24H0zM12.500 12.500H24V24H12.500z"/></svg></a>
        <div class="search">
            <svg class="ico"><use href="#i-zoom"/></svg>
            <input type="text" placeholder="Pesquisar" aria-label="Pesquisar">
            <svg class="art" viewBox="0 0 38 28"><path fill="#7b9440" d="M0 28q18-6 38 0z"/><path fill="#dcb49c" d="M6 1h10v9h6V1h10v26H6z"/><path fill="#5d4a44" d="M8 3h2v7H8zM12 3h2v7h-2zM24 3h2v7h-2zM28 3h2v7h-2zM8 21h4v6H8zM17 20h4v7h-4zM26 21h4v6h-4zM6 12h26v1H6zM6 19h26v1H6zM9 14h3v4H9zM26 14h3v4h-3z"/><circle cx="19" cy="16" r="2.200" fill="#5d4a44"/></svg>
        </div>
        <a href="#" class="app"><svg viewBox="0 0 24 24"><path fill="#eee" d="M7 1h17v16H7z"/><path fill="#555" d="M0 7h17v16H0z"/><path fill="#999" d="M7 7h10v10H7z"/></svg></a>
        <a href="#" class="app"><svg viewBox="0 0 24 24"><path fill="#1a8fe8" d="M8 1h8q3 0 4 5l-6 1-5 10H5q-5 0-4-6Q3 1 8 1z"/><path fill="#f4c430" d="M2 9h8l-2 8H4q-4-1-2-8z"/><path fill="#3cb54a" d="m3 6 8 1-2 5H1z"/><path fill="#e2589f" d="M14 7h6q5 1 3 7-2 9-7 9H8q-2 0-3-5h5z"/><path fill="#f78a3c" d="m6 19 6-2 3 6H8q-2 0-2-4z"/><path fill="#a35ce0" d="M15 7h5q4 0 3 6l-9-1z"/></svg></a>
        <a href="#" class="app"><svg viewBox="0 0 24 24"><path fill="none" stroke="#3bb0e8" stroke-width="2" d="M7 7V1h10v6"/><path fill="#f1f1f1" d="M0 5h24v16q0 3-3 3H3q-3 0-3-3z"/><path fill="#e8502c" d="M7 9h4.500v4.500H7z"/><path fill="#79b52c" d="M12.500 9H17v4.500h-4.500z"/><path fill="#1ba0e2" d="M7 14.500h4.500V19H7z"/><path fill="#f6b51c" d="M12.500 14.500H17V19h-4.500z"/></svg></a>
        <a href="#" class="app"><svg viewBox="0 0 24 24"><path fill="none" stroke="#12c8f5" stroke-width="3.200" d="M13 22.500a10.300 10.300 0 1 0-4-.5q1.500.5 4 .500"/></svg></a>
        <a href="#" class="app current run"><span class="ps-logo big">Ps</span></a>
        <a href="#" class="app"><svg><use href="#a-chrome"/></svg></a>
        <a href="#" class="app"><svg viewBox="0 0 24 24"><circle cx="12" cy="13.500" r="10.500" fill="#f5493c"/><path fill="#ffd335" d="M14 0q9 5 9 13 0 5-4 8 1-8-5-13-1-4 0-8z"/><path fill="#ff8a1f" d="M2 4l4 2q4-2 7 2l-3 2-7 4q-3-5-1-10z"/><path fill="#e5268c" d="M2 15q3 8 11 9-8 1-11-9z"/><circle cx="12" cy="13.500" r="4.500" fill="#7b4bd8"/></svg></a>
        <a href="#" class="app"><svg viewBox="0 0 24 24"><ellipse cx="12" cy="12" rx="8.500" ry="9.500" fill="none" stroke="#e3202c" stroke-width="5"/><path fill="#ff5a50" d="M16 2q8 3 8 10t-8 10q3-10 0-20z"/></svg></a>
        <a href="#" class="app"><svg viewBox="0 0 24 24"><g fill="none" stroke="#d8204c" stroke-width="1.300"><circle cx="12" cy="12" r="11.200"/><ellipse cx="12" cy="12" rx="6.500" ry="10"/><ellipse cx="13" cy="12" rx="8.500" ry="10.500"/></g></svg></a>
        <a href="#" class="app run"><svg viewBox="0 0 24 24"><circle cx="12" cy="12" r="10.500" fill="#f7b61a" stroke="#111" stroke-width="2.600"/><path fill="none" stroke="#111" stroke-width="2.400" d="M12 6 6 16h12zM10 14l4-1"/></svg><svg class="cursor"><use href="#i-cursor"/></svg></a>
        <a href="#" class="app open"><svg><use href="#a-spotify"/></svg></a>
        <a href="#" class="app"><svg viewBox="0 0 24 24"><circle cx="12" cy="12" r="12" fill="#f3101a"/><circle cx="12" cy="12" r="6.500" fill="none" stroke="#fff" stroke-width="1.300"/><path fill="#fff" d="m10 8.500 6 3.500-6 3.500z"/></svg></a>
        <a href="#" class="app"><svg viewBox="0 0 24 24"><path fill="#e87010" d="m10.500 1 3 0 5.500 18H5zM2 19h20l1 4H1z"/><path fill="#eee" d="m9.200 6 5.600 0 1.200 4H8zM6.700 14h10.600l1.200 4h-13z"/></svg></a>
        <a href="#" class="app"><svg viewBox="0 0 24 24"><path fill="#16183a" d="M0 0h24v24H0z"/><path fill="none" stroke="#fff" stroke-width="2.200" d="M6 17a8 8 0 1 1 12 0M11 14l4-4"/></svg></a>
        <a href="#" class="app"><svg viewBox="0 0 24 24"><path fill="#107c10" d="M0 0h24v24H0z"/><circle cx="12" cy="13" r="10" fill="#fff"/><path fill="#107c10" d="M6 4q6 2 6 4 0-2 6-4-6-2-12 0zM12 10q5 3 7 9l-2 2q-1-5-5-8-4 3-5 8l-2-2q2-6 7-9z"/></svg><span class="badge">7</span></a>
        <a href="#" class="app"><svg viewBox="0 0 24 24"><path fill="#8a1c8e" d="M12 2a3.500 3.500 0 0 1 2 6.300l5-1.300v3l-4 1 3 9-3 2-3-7-3 7-3-2 3-9-4-1V7l5 1.300A3.500 3.500 0 0 1 12 2z"/></svg></a>
        <a href="#" class="app open"><svg><use href="#a-chrome"/></svg><span class="badge orange"></span></a>
    </div>
    <div class="tray">
        <svg><use href="#a-spotify"/></svg>
        <svg viewBox="0 0 24 24"><rect width="24" height="24" rx="3" fill="#fff"/><path fill="#fbbc04" d="M9 4h6l6 11h-6z"/><path fill="#0f9d58" d="m9 4 3 5-6 11-3-5z"/><path fill="#4285f4" d="M9 15h12l-3 5H6z"/></svg>
        <svg viewBox="0 0 24 24"><path fill="#1c241c" d="M0 0h24v24H0z"/><path fill="none" stroke="#5a9c34" stroke-width="2" d="M4 12q6-7 9 0-4 5-7 0M11 6h10v12H11q6-5 6-7"/></svg>
        <svg><use href="#a-shield"/></svg>
        <svg viewBox="0 0 24 24"><circle cx="12" cy="12" r="12" fill="#141414"/><path fill="none" stroke="#fff" stroke-width="3" d="M15 6q-8-1-8 6t8 6v-6h-3"/></svg>
        <svg viewBox="0 0 24 24"><rect width="24" height="24" rx="2" fill="#0c0c0c"/><path fill="none" stroke="#d83a3a" stroke-width="1.500" d="M6 20q6 4 12 0"/><path fill="none" stroke="#2aa08c" stroke-width="1.500" d="M6 4q6-4 12 0"/><path fill="none" stroke="#ddd" stroke-width="1.500" d="M5 9H2v6h3M6 9h5M8.500 9v7M13 16V9h3v3h-3l3 4M19 8v8h3"/></svg>
        <svg viewBox="0 0 24 24"><path fill="#fff" d="M5 12h14v12H5z"/><path fill="#111" d="M10 16h4v4h-4z"/><path fill="none" stroke="#fff" stroke-width="2" d="M9 12V9h6v3M6 5q6-6 12 0M8 7q4-4 8 0"/></svg>
        <svg viewBox="0 0 24 24"><path fill="#d41820" d="M4 1h20v17l-5 6H0V6z"/><path fill="none" stroke="#fff" stroke-width="3" d="m5 8 11 11M17 5 5 18"/></svg>
        <svg viewBox="0 0 24 24"><path fill="#262626" stroke="#6aa83c" stroke-width="2" d="M1 1h22v22H1z"/><g fill="none" stroke-dasharray="3 1" stroke-width="3"><path stroke="#e4784a" d="M3 6h18"/><path stroke="#b3b44a" d="M3 10h18"/><path stroke="#6ac06a" d="M3 14h18"/><path stroke="#55a3c0" d="M3 18h18"/></g></svg>
        <svg viewBox="0 0 24 24"><path fill="none" stroke="#eee" stroke-width="1.800" d="M8 7V1h7v6M6 8h11v8M6 8v13q0 2 3 2h3M14 19l3 3 6-7M10 4h1M13 4h1"/></svg>
        <svg viewBox="0 0 24 24"><use href="#a-shield"/><circle cx="17" cy="17" r="7" fill="#12801c"/><path fill="none" stroke="#fff" stroke-width="2" d="m14 17 2.500 2.500L20 15"/></svg>
        <svg viewBox="0 0 24 24"><g fill="none" stroke="#e8eef2" stroke-width="2.500"><circle cx="8" cy="9" r="5.500"/><circle cx="16" cy="15" r="5"/></g><circle cx="8" cy="9" r="2" fill="#fff"/><circle cx="16" cy="16" r="2.500" fill="#1e90d0"/></svg>
        <svg viewBox="0 0 24 24"><rect x="3" width="18" height="24" rx="9" fill="#0d78d8"/><path fill="none" stroke="#fff" stroke-width="1.800" d="m7 8 10 8-5 4V4l5 4-10 8"/></svg>
        <svg viewBox="0 0 24 24"><path fill="#bdbdbd" d="M5 19q-5 0-5-5t6-5q2-5 7-4 4 1 5 5 6 0 6 5 0 4-5 4z"/><path fill="#f0f0f0" d="M5 19q-5-1-5-5 5-5 11-1 6-4 13 2 0 4-5 4z"/></svg>
        <div class="lang"><div>POR</div><div>PTB2</div></div>
        <svg viewBox="0 0 24 24" class="net"><path fill="none" stroke="#fff" stroke-width="1.700" d="M13 3H2v15h14M5 22h10M10 18v4M17 1h6v7h-6zM20 8v10M17 18h3"/></svg>
        <svg viewBox="0 0 24 24" class="vol"><path fill="none" stroke="#fff" stroke-width="1.700" d="M2 9h4l5-5v16l-5-5H2zM14 9q2 3 0 6"/><path fill="none" stroke="#8a7a70" stroke-width="1.700" d="M17 6q4 6 0 12M20 3q6 9 0 18"/></svg>
        <div class="clock"><div>14:49:15</div><div>08/12/2024</div></div>
        <svg class="tray-bell"><use href="#i-bell"/></svg>
    </div>
</footer>

<script src="script.js"></script>
</body>
</html>
```
FILE: styles.css
```css
* {
    box-sizing: border-box;
}

body {
    margin: 0;
    height: 100vh;
    display: flex;
    flex-direction: column;
    overflow: hidden;
    background: #1c1c1c;
    color: #c8c8c8;
    font: 10px/14px Roboto, "Noto Sans", sans-serif;
}

button, input, select {
    font: inherit;
    color: inherit;
    margin: 0;
    padding: 0;
    border: 0;
    background: none;
}

select {
    appearance: none;
}

a {
    color: inherit;
    text-decoration: none;
}

svg {
    display: block;
    fill: currentColor;
}

.sprite {
    position: absolute;
    width: 0;
    height: 0;
}

.ln {
    fill: none;
    stroke: currentColor;
    stroke-width: var(--line, 1.5);
}

.ico {
    width: 16px;
    height: 16px;
    color: #d6d6d6;
    flex: none;
}

.ico.tiny {
    --line: 2.6;
    width: 9px;
    height: 9px;
    color: #9a9a9a;
}

.ico.up { transform: rotate(180deg); }
.ico.left { transform: rotate(90deg); }
.ico.right { transform: rotate(-90deg); }

.ico.dim, .dim {
    color: #757575;
}

.field {
    height: 18px;
    padding: 0 4px;
    background: #232323;
    border: 1px solid #454545;
    color: #e2e2e2;
}

.field:disabled {
    color: #6a6a6a;
    border-color: #3c3c3c;
}

.drop {
    height: 22px;
    padding: 0 8px;
    border: 1px solid #454545;
    border-radius: 3px;
    color: #e2e2e2;
    background: #232323 url("data:image/svg+xml,%3Csvg xmlns='http://www.w3.org/2000/svg' viewBox='0 0 8 8'%3E%3Cpath fill='none' stroke='%23888' d='m1 2 3 4 3-4'/%3E%3C/svg%3E") right 3px center / 8px no-repeat;
}

/* Menu bar */
.menubar {
    display: flex;
    align-items: center;
    height: 28px;
    flex: none;
    padding: 0 2px 0 5px;
    background: #2f2f2f;
    font: 11px/16px "Open Sans", sans-serif;
    color: #dedede;
}

.ps-logo {
    width: 16px;
    height: 15px;
    margin-bottom: 4px;
    border-radius: 3px;
    background: #001e36;
    color: #31a8ff;
    font: bold 8px/15px "Open Sans", sans-serif;
    text-align: center;
}

.ps-logo.big {
    width: 22px;
    height: 22px;
    margin: 0;
    font-size: 12px;
    line-height: 21px;
}

.menus {
    display: flex;
    gap: 13px;
    margin: 0 auto 4px 14px;
}

.window-buttons {
    display: flex;
    padding-bottom: 7px;
    color: #fff;
}

.window-buttons button {
    width: 46px;
    display: grid;
    place-items: center;
}

.window-buttons svg {
    --line: 1;
    width: 10px;
    height: 10px;
}

/* Options bar */
.options {
    display: flex;
    align-items: center;
    height: 35px;
    flex: none;
    border-top: 1px solid #1c1c1c;
    border-bottom: 1px solid #1c1c1c;
    background: #2f2f2f;
}

.options > *:not(:last-child) {
    display: flex;
    align-items: center;
    height: 22px;
    border-left: 1px solid #242424;
}

.options .home {
    width: 49px;
    margin-left: 4px;
    padding-left: 12px;
    border-left: 3px double #262626;
}

.home .ico {
    width: 18px;
    height: 18px;
}

.options .tool-preset {
    width: 49px;
    gap: 9px;
    padding-left: 7px;
}

.options .modes {
    width: 120px;
    gap: 2px;
    padding-left: 8px;
}

.modes button {
    width: 24px;
    height: 25px;
    display: grid;
    place-items: center;
}

.modes .active, .tools .active, .orient .active {
    background: #191919;
    border: 1px solid #3f3f3f;
    border-radius: 3px;
}

.options .feather {
    width: 205px;
    padding-left: 11px;
}

.feather .field {
    width: 54px;
    margin: 0 9px 0 6px;
}

.tick {
    appearance: none;
    width: 9px;
    height: 9px;
    margin-right: 5px;
    background: #232323;
    border: 1px solid #3c3c3c;
    border-radius: 2px;
}

.options .style-opts {
    width: 308px;
    padding-left: 12px;
    gap: 5px;
}

.style-opts .drop {
    width: 94px;
    margin-right: 8px;
}

.style-opts .field {
    width: 37px;
}

.style-opts .ico {
    margin: 0 12px 0 8px;
}

.options .mask-btn {
    padding: 0 12px;
    margin-left: 10px;
    border: 2px solid #3f3f3f;
    border-radius: 4px;
    background: #232323;
    color: #f0f0f0;
}

.options-right {
    display: flex;
    align-items: center;
    gap: 15px;
    margin-left: auto;
    padding-right: 4px;
}

.options-right .ico:not(.tiny) {
    width: 17px;
    height: 17px;
}

.options-right .ico.tiny {
    margin-left: -6px;
}

.share {
    height: 24px;
    padding: 0 13px;
    border-radius: 12px;
    background: #0d74e8;
    color: #fff;
}

/* Workspace */
.workspace {
    flex: 1;
    min-height: 0;
    display: flex;
    gap: 2px;
    padding: 0 2px 1px 0;
}

.strip {
    height: 12px;
    flex: none;
    padding: 0 8px;
    background: #232323;
    font: bold 13px/9px "Liberation Sans", sans-serif;
}

.strip.end {
    text-align: right;
}

.grip {
    height: 4px;
    width: 20px;
    margin: 4px auto 8px;
    background: repeating-linear-gradient(90deg, #1f1f1f 0 1px, transparent 1px 2px);
}

.toolbar {
    width: 40px;
    background: #2f2f2f;
}

.toolbar .strip {
    padding-left: 4px;
    border-bottom: 1px solid #1c1c1c;
}

.toolbar .grip {
    width: 12px;
}

.tools {
    display: flex;
    flex-direction: column;
    padding-left: 4px;
}

.tools button {
    position: relative;
    width: 31px;
    height: 26px;
    display: grid;
    place-items: center;
}

.tools .ico {
    width: 17px;
    height: 17px;
}

.tools .more::after {
    content: "";
    position: absolute;
    right: 3px;
    bottom: 3px;
    border: solid transparent;
    border-width: 0 0 4px 4px;
    border-bottom-color: #b0b0b0;
}

.tools .gen {
    margin-top: 4px;
}

.fgbg {
    width: 40px;
    height: 52px;
    margin: 2px 0 0;
}

/* Document */
.document {
    flex: 1;
    min-width: 0;
    display: flex;
    flex-direction: column;
}

.doc-tabs {
    height: 29px;
    background: #222;
    border-bottom: 1px solid #1a1a1a;
}

.doc-tab {
    display: inline-flex;
    align-items: center;
    gap: 8px;
    height: 28px;
    padding: 0 10px;
    background: #2f2f2f;
    color: #e0e0e0;
    font: bold 11px/16px "Open Sans", sans-serif;
}

.doc-tab button {
    color: #a0a0a0;
    font-size: 13px;
    font-weight: normal;
}

.view {
    flex: 1;
    min-height: 0;
    display: grid;
    grid-template: 17px minmax(0, 1fr) 16px / 17px minmax(0, 1fr) 16px;
}

.corner {
    background: #262626;
    border: dotted #555;
    border-width: 0 1px 1px 0;
    border-right-color: #444;
}

.ruler {
    width: 100%;
    height: 100%;
    background: #232323;
    color: #8c8c8c;
    font: 9px Roboto, sans-serif;
}

.ruler line {
    stroke: #7c7c7c;
}

.ruler .pointer {
    stroke: #b8b8b8;
    stroke-width: 2;
}

.vscroll {
    grid-area: 1 / 3 / 3 / 4;
    display: flex;
    flex-direction: column;
    align-items: center;
    padding: 6px 0;
    background: #232323;
}

.vtrack {
    flex: 1;
    width: 12px;
    padding-top: 273px;
}

.vthumb {
    height: 57%;
    border-radius: 2px;
    background: #454545;
}

.canvas-area {
    position: relative;
    display: grid;
    place-items: center;
    background: #111;
}

.artboard {
    width: 79.7%;
    aspect-ratio: 64 / 27;
    background: #fff;
}

/* floats over the canvas */
.context-bar {
    position: absolute;
    bottom: 47px;
    left: 50%;
    transform: translateX(-50%);
    display: flex;
    align-items: center;
    gap: 6px;
    height: 36px;
    padding: 0 11px 0 4px;
    border-radius: 4px;
    background: #2d2d2d;
    font: 12px/16px "Open Sans", sans-serif;
    color: #e4e4e4;
}

.context-bar .handle {
    width: 5px;
    height: 28px;
    margin-right: 2px;
    background: repeating-linear-gradient(#ccc 0 2px, transparent 2px 4px);
}

.context-bar button {
    display: flex;
    align-items: center;
    gap: 7px;
    height: 29px;
    padding: 0 10px;
    border: 1px solid #666;
    border-radius: 3px;
}

.context-bar button + button .ico {
    width: 18px;
    height: 18px;
    margin-right: 3px;
}

.context-bar .dots {
    margin-left: 8px;
    width: 14px;
}

.status {
    grid-column: 1 / 4;
    display: flex;
    align-items: center;
    background: #232323;
}

.status .zoom {
    width: 48px;
    padding-left: 4px;
    font: 13px/16px "Open Sans", sans-serif;
    color: #ddd;
}

.status .size {
    display: flex;
    align-items: center;
    justify-content: space-between;
    width: 184px;
    height: 16px;
    padding: 0 5px 0 26px;
    margin-right: 6px;
    background: #2f2f2f;
    color: #b0b0b0;
}

.htrack {
    flex: 1;
    height: 12px;
    padding: 0 600px;
}

.hthumb {
    height: 12px;
    background: #454545;
}

.status > .ico:last-child {
    margin: 0 22px 0 0;
}

/* Collapsed dock */
.dock {
    width: 38px;
    background: #2f2f2f;
    margin-right: 1px;
}

.dock-group {
    display: flex;
    flex-direction: column;
    align-items: center;
    gap: 8px;
    height: 69px;
    border-top: 1px solid #1c1c1c;
    border-bottom: 2px solid #1c1c1c;
}

.dock-group .grip {
    margin-bottom: -3px;
}

.dock-group .ico {
    width: 20px;
    height: 20px;
}

/* Panels */
.panels {
    width: 299px;
    display: flex;
    flex-direction: column;
}

.panel {
    display: flex;
    flex-direction: column;
    margin-bottom: 3px;
    background: #2f2f2f;
}

.panel.grow {
    flex: 1;
    margin-bottom: 0;
}

.tabs {
    display: flex;
    height: 28px;
    flex: none;
    background: #222;
    font: 600 10px/14px "Open Sans", sans-serif;
}

.tabs button {
    height: 27px;
    padding: 0 8px 4px;
    border-right: 1px solid #1b1b1b;
    color: #858585;
}

.tabs .active {
    height: 28px;
    padding-bottom: 5px;
    background: #2f2f2f;
    color: #ececec;
}

.burger {
    width: 10px;
    height: 8px;
    margin: 10px 4px 0 auto;
    background: repeating-linear-gradient(#999 0 1px, transparent 1px 2px);
}

.color-body {
    padding: 8px 14px 8px 8px;
}

.color-top {
    display: flex;
}

.swatches {
    width: 36px;
    height: 66px;
    margin-top: 1px;
}

.swatches .warn {
    color: #d0d0d0;
}

.sliders {
    flex: 1;
    margin: -2px 0 2px;
}

.slider {
    display: flex;
    align-items: center;
    height: 22px;
    gap: 3px;
}

.slider label {
    width: 10px;
    text-align: center;
    color: #a0a0a0;
}

.slider .field {
    width: 39px;
}

.range {
    appearance: none;
    width: 171px;
    height: 18px;
}

.range.red { background: linear-gradient(90deg, #00e400 65%, #ffe600) 4px 0 / 165px 6px no-repeat; }
.range.green { background: linear-gradient(90deg, #f00, #ff0) 4px 0 / 165px 6px no-repeat; }
.range.blue { background: linear-gradient(90deg, #ffe600 30%, #ffe6fa) 4px 0 / 165px 6px no-repeat; }

.range::-webkit-slider-thumb {
    appearance: none;
    width: 10px;
    height: 9px;
    margin-top: 8px;
    background: #eee;
    clip-path: polygon(50% 0, 100% 60%, 100% 100%, 0 100%, 0 60%);
}

.spectrum {
    width: 100%;
    height: 122px;
    margin-top: 2px;
}

.doc-row {
    display: flex;
    align-items: center;
    gap: 6px;
    height: 34px;
    padding: 1px 0 0 10px;
    border-bottom: 1px solid #1f1f1f;
}

.chip {
    display: grid;
    place-items: center;
    width: 23px;
    height: 23px;
    background: #191919;
    border: 1px solid #3a3a3a;
    border-radius: 3px;
}

.props {
    display: flex;
    height: 183px;
}

.props-main {
    flex: 1;
}

.props h2 {
    display: flex;
    align-items: center;
    gap: 7px;
    margin: 8px 0 7px 7px;
    font: bold 10px/15px "Open Sans", sans-serif;
    color: #e0e0e0;
}

.dims {
    display: grid;
    grid-template-columns: 28px 14px 54px 14px 54px;
    gap: 7px 6px;
    align-items: center;
    padding-left: 14px;
}

.dims label {
    text-align: right;
    color: #a8a8a8;
}

.dims .field {
    width: 54px;
}

.dims .link {
    grid-row: 1 / 3;
}

.orient {
    display: flex;
    align-items: center;
    gap: 6px;
    margin: 10px 0 0 72px;
}

.orient button {
    width: 25px;
    height: 25px;
    display: grid;
    place-items: center;
}

.orient button:first-child {
    width: 16px;
}

.res {
    margin: 11px 0 0 68px;
}

.mode {
    margin: 11px 0 0 54px;
}

.props-scroll {
    display: flex;
    flex-direction: column;
    align-items: center;
    width: 16px;
    height: 158px;
    margin-top: 1px;
    padding: 6px 0;
    background: #242424;
}

.props-thumb {
    width: 12px;
    height: 42px;
    margin: 3px 0 auto;
    background: #454545;
}

/* Layers */
.layer-filter, .layer-blend, .layer-lock {
    display: flex;
    align-items: center;
    padding: 0 4px;
    color: #868686;
}

.layer-filter {
    height: 32px;
    padding-top: 6px;
    border-bottom: 1px solid #1f1f1f;
}

.search-drop {
    position: relative;
    width: 108px;
}

.search-drop .ico {
    position: absolute;
    left: 8px;
    top: 6px;
    width: 11px;
    height: 11px;
}

.search-drop .drop {
    width: 100%;
    padding-left: 22px;
}

.layer-filter .drop, .layer-blend .drop {
    color: #858585;
}

.filters {
    display: flex;
    gap: 12px;
    margin: 0 auto 0 33px;
}

.filters .ico, .layer-lock .ico {
    width: 12px;
    height: 12px;
    color: #9a9a9a;
}

.toggle {
    width: 9px;
    height: 17px;
    margin-bottom: 4px;
    border: 1px solid #3c3c3c;
    border-radius: 5px;
    background: radial-gradient(circle at 50% 4px, #8c8c8c 4px, #262626 5px);
}

.layer-blend {
    height: 28px;
    border-bottom: 1px solid #1f1f1f;
}

.layer-blend .drop {
    width: 180px;
}

.layer-blend label {
    margin-left: 7px;
}

.layer-lock label {
    margin-left: auto;
}

.percent {
    display: flex;
    width: 51px;
    height: 17px;
    margin-left: 4px;
    background: #232323;
    border: 1px solid #3f3f3f;
    border-radius: 2px;
}

.layer-blend .percent {
    margin-left: auto;
}

.percent input {
    width: 35px;
    padding-left: 5px;
}

.percent button {
    width: 14px;
    border-left: 1px solid #3f3f3f;
    display: grid;
    place-items: center;
}

.layer-lock {
    height: 30px;
    gap: 10px;
    padding-left: 6px;
}

.layer-lock .percent {
    margin-left: -6px;
}

.layers {
    height: 94px;
    border-bottom: 1px solid #1f1f1f;
}

.list {
    background: linear-gradient(90deg, #282828 284px, #242424 284px);
}

.layer {
    display: flex;
    width: 284px;
    height: 23px;
}

.eye {
    display: grid;
    place-items: center;
    width: 30px;
    border-right: 1px solid #222;
}

.eye .ico {
    width: 13px;
}

.layer-main {
    flex: 1;
    display: flex;
    align-items: center;
    gap: 10px;
    padding: 0 15px 0 4px;
    background: #4a4a4a;
    color: #f0f0f0;
}

.layer-main em {
    margin-right: auto;
}

.layer-main .ico {
    width: 12px;
    height: 12px;
}

.thumb {
    width: 31px;
    height: 14px;
    background: #fff;
    border: 1px solid #777;
}

.panel-foot {
    display: flex;
    align-items: center;
    justify-content: flex-end;
    gap: 14px;
    height: 24px;
    flex: none;
    padding-right: 26px;
}

.panel-foot .ico {
    width: 13px;
    height: 13px;
}

.fx {
    color: #808080;
    font: italic 13px/12px "Liberation Serif", serif;
}

.grow .panel-foot {
    gap: 17px;
    border-top: 1px solid #1f1f1f;
}

/* History */
.history {
    flex: 1;
}

.snapshot {
    display: flex;
    align-items: center;
    gap: 6px;
    width: 284px;
    height: 29px;
    padding: 2px 0 0 5px;
    background: #2f2f2f;
    border-bottom: 1px solid #4a4a4a;
    color: #b4b4b4;
}

.snapshot .ico, .state .ico {
    width: 14px;
    height: 14px;
}

.state {
    display: flex;
    align-items: center;
    width: 284px;
    height: 22px;
    margin-top: 2px;
    padding-left: 6px;
    background: #4a4a4a;
    color: #ececec;
}

.slot {
    width: 11px;
    height: 11px;
    margin-right: 15px;
    border: solid #222;
    border-width: 1px 0 0 1px;
}

.state .ico {
    margin-right: 12px;
}

/* Taskbar */
.taskbar {
    height: 48px;
    flex: none;
    display: grid;
    grid-template-columns: 1fr auto 1fr;
    align-items: center;
    border-top: 1px solid #4a403c;
    background: linear-gradient(90deg, #281919 0, #281918 5%, #36200a 7%, #34190c 11%, #2b1815 16%, #2d1713 28%, #2d2208 35%, #36190a 43%, #2b1816 50%, #34190c 54%, #2f2009 60%, #2a1816 67%, #331a0c 73%, #2b1a18 80%, #351a0c 84%, #2a1819 91%, #2f220a 95%, #33200a 100%);
    color: #fff;
    font: 11px/16px "Open Sans", sans-serif;
}

.weather {
    display: flex;
    align-items: center;
    gap: 7px;
    padding: 0 0 2px 19px;
}

.weather svg {
    width: 24px;
    height: 20px;
}

.weather .sub {
    color: #c4bab6;
}

.apps {
    display: flex;
    align-items: center;
}

.app {
    position: relative;
    display: grid;
    place-items: center;
    width: 44px;
    height: 40px;
}

.app:first-child {
    width: 45px;
}

.app svg {
    width: 23px;
    height: 24px;
}

.app.current::before {
    content: "";
    position: absolute;
    inset: 0 2px;
    border: 1px solid #4b3530;
    border-radius: 4px;
    background: #ffffff14;
}

.app .ps-logo {
    position: relative;
}

.app.run::after, .app.open::after {
    content: "";
    position: absolute;
    bottom: 0;
    width: 16px;
    height: 3px;
    border-radius: 2px;
    background: #18b4e4;
}

.app.open::after {
    width: 6px;
    background: #9a908c;
}

.app .cursor {
    position: absolute;
    right: 8px;
    top: 3px;
    width: 10px;
    height: 14px;
}

.badge {
    position: absolute;
    right: 3px;
    top: 2px;
    width: 16px;
    height: 16px;
    border-radius: 50%;
    background: #10b8f0;
    color: #111;
    text-align: center;
}

.badge.orange {
    background: repeating-linear-gradient(160deg, #f07818 0 4px, #ffc890 4px 6px);
}

.search {
    display: flex;
    align-items: center;
    gap: 10px;
    width: 220px;
    height: 32px;
    margin: 0 2px;
    padding: 0 10px 0 11px;
    border: 1px solid #6a5c4a;
    border-radius: 16px;
    background: #4a3c2e;
    font-size: 13px;
}

.search input {
    flex: 1;
    min-width: 0;
}

.search input::placeholder {
    color: #d4ccc4;
}

.search .art {
    width: 38px;
    height: 28px;
}

.tray {
    display: flex;
    align-items: center;
    justify-content: flex-end;
    gap: 16px;
    padding-right: 21px;
}

.tray svg {
    width: 16px;
    height: 16px;
}

.lang {
    width: 30px;
    margin-right: -2px;
    text-align: center;
}

.tray .net {
    margin-right: -9px;
}

.tray .net, .tray .vol {
    width: 17px;
    height: 17px;
}

.clock {
    margin-left: -3px;
    text-align: right;
    font-size: 12px;
}

.tray .tray-bell {
    width: 15px;
    margin-left: -9px;
    color: #5cc8f4;
}
```
FILE: script.js
```javascript
const DOC_WIDTH = 2560;
const STEP = 50;
const pointer = { x: 13, y: 546 };

function add(parent, name, attrs, text) {
    const el = document.createElementNS('http://www.w3.org/2000/svg', name);
    for (const key in attrs) el.setAttribute(key, attrs[key]);
    if (text !== undefined) {
        el.textContent = text;
        el.setAttribute('fill', 'currentColor');
    }
    parent.appendChild(el);
}

function drawRuler(svg, origin, length, scale, vertical) {
    svg.innerHTML = '';

    const tick = (pos, from, cls) => {
        const p = Math.round(pos) + 0.5;
        add(svg, 'line', vertical
            ? { x1: from, x2: 17, y1: p, y2: p, class: cls }
            : { x1: p, x2: p, y1: from, y2: 17, class: cls });
    };

    const first = Math.floor(-origin / scale / STEP);
    const last = Math.ceil((length - origin) / scale / STEP);

    for (let i = first; i <= last; i++) {
        const pos = origin + i * STEP * scale;
        const label = String(Math.abs(i * STEP));

        tick(pos, 0, 'major');
        for (let m = 1; m < 5; m++) tick(pos + m * 10 * scale, 15, 'minor');

        if (vertical) {
            // digits are stacked one under another
            [...label].forEach((digit, n) => {
                const y = Math.round(pos) + 9 + n * 8;
                if (y > 8 && y < length - 2) add(svg, 'text', { x: 6, y: y }, digit);
            });
        } else if (pos + 2 > 0 && pos + 20 < length + 4) {
            add(svg, 'text', { x: Math.round(pos) + 2, y: 13 }, label);
        }
    }

    tick(origin + pointer[vertical ? 'y' : 'x'] * scale, 0, 'pointer');
}

function drawRulers() {
    const board = document.getElementById('artboard').getBoundingClientRect();
    const rx = document.getElementById('rulerX');
    const ry = document.getElementById('rulerY');
    const x = rx.getBoundingClientRect();
    const y = ry.getBoundingClientRect();
    const scale = board.width / DOC_WIDTH;

    drawRuler(rx, board.left - x.left, x.width, scale, false);
    drawRuler(ry, board.top - y.top, y.height, scale, true);
}

window.addEventListener('resize', drawRulers);
drawRulers();
```
